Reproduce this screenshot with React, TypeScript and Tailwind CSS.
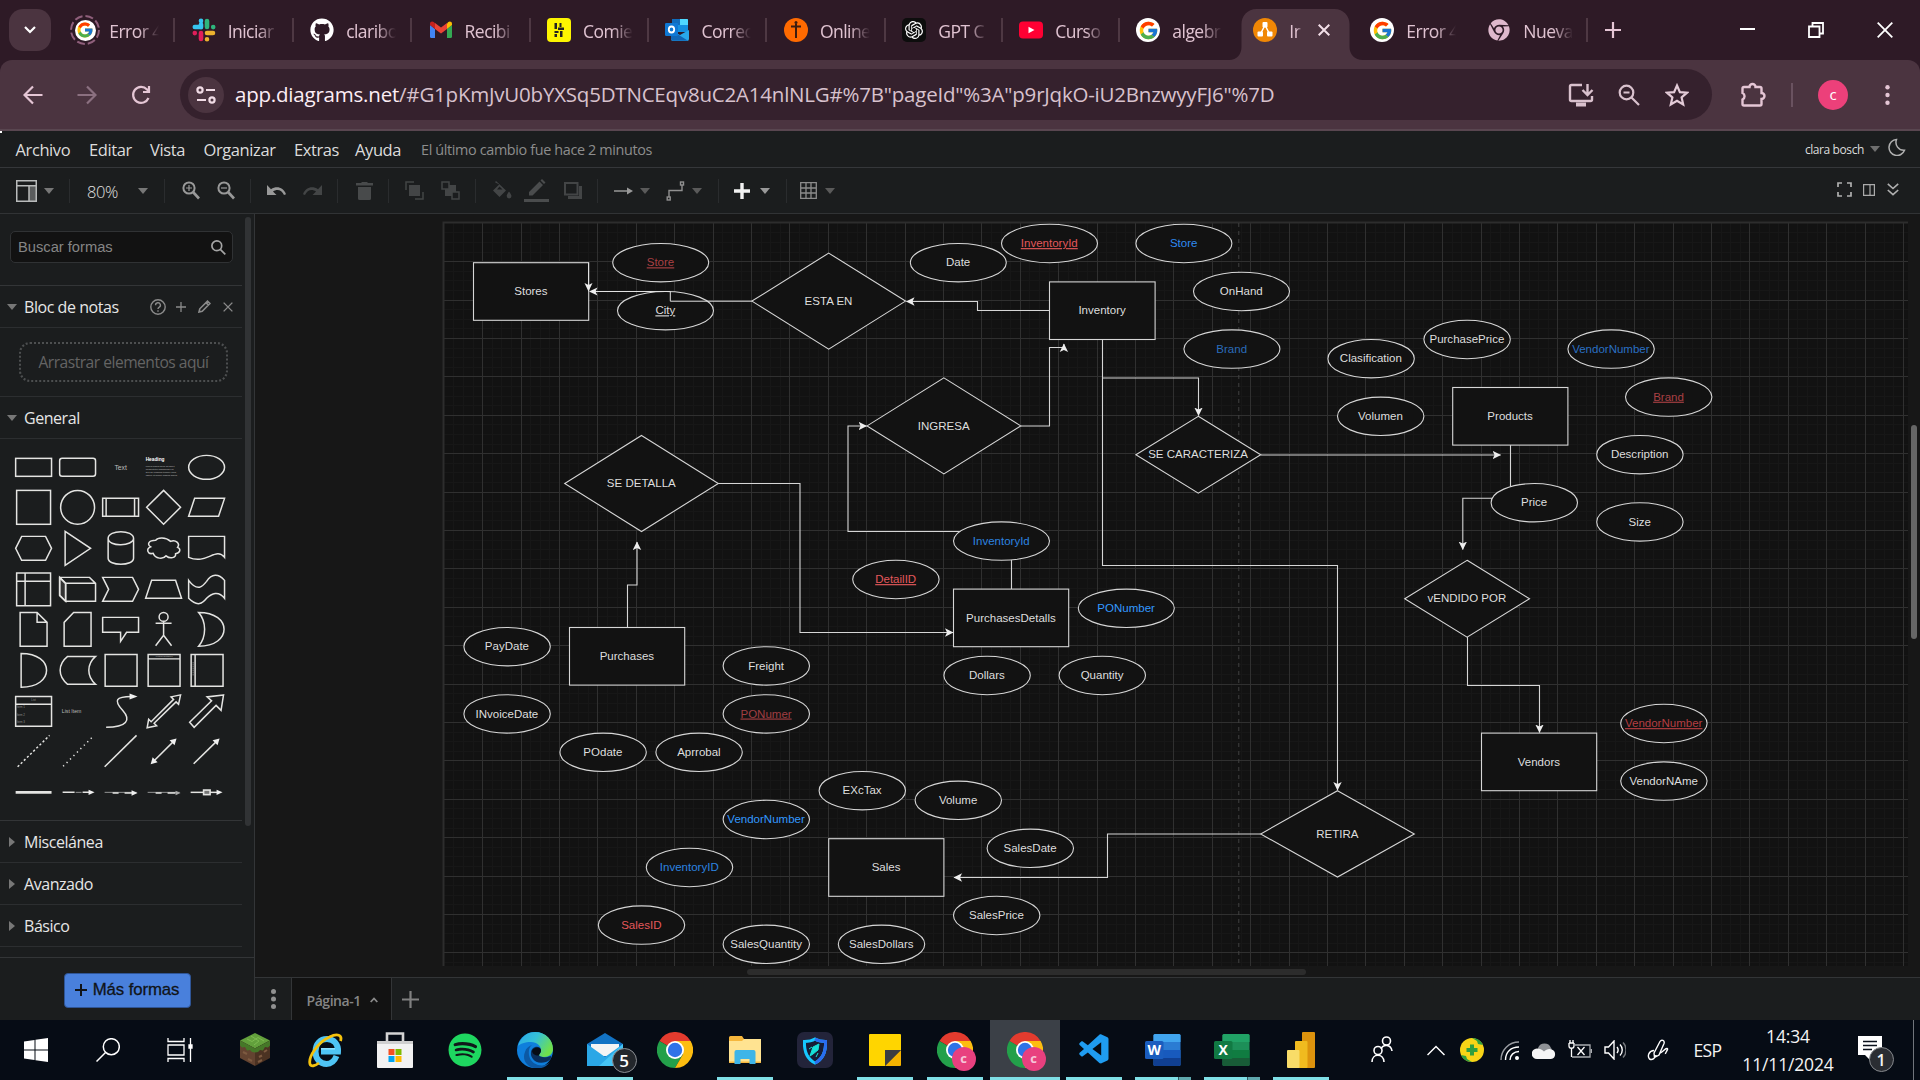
import type { ReactNode } from "react";
import { FcGoogle } from "react-icons/fc";
import { FaGithub, FaSpotify, FaChrome } from "react-icons/fa";
import { SiOpenai } from "react-icons/si";
import { VscVscode } from "react-icons/vsc";

/* ---------- Favicons ---------- */

const GoogleIcon = () => (
  <span className="flex size-6 items-center justify-center rounded-full bg-white">
    <FcGoogle className="size-[21px]" />
  </span>
);

const LoadingGoogle = () => (
  <span className="relative flex size-6 items-center justify-center">
    <svg className="absolute -inset-[3px] size-[30px]" viewBox="0 0 30 30" fill="none" stroke="#8f5f7b" strokeWidth="2">
      <circle cx="15" cy="15" r="14" strokeDasharray="8 3" />
    </svg>
    <span className="flex size-[21px] items-center justify-center rounded-full bg-white">
      <FcGoogle className="size-[18px]" />
    </span>
  </span>
);

const SlackIcon = () => (
  <svg viewBox="0 0 24 24" className="size-6">
    <g strokeWidth="4.6" strokeLinecap="round">
      <path d="M9 2.800v.100M9 6.500V9.200M2.800 9H6.500" stroke="#36c5f0" />
      <path d="M15 3v6M21.200 9v.100" stroke="#2eb67d" />
      <path d="M15 15h6M15 21.200v.100" stroke="#ecb22e" />
      <path d="M9 15v6M2.800 15v.100" stroke="#e01e5a" />
    </g>
  </svg>
);

const GmailIcon = () => (
  <svg viewBox="0 0 24 24" className="size-6">
    <path d="M1 19V7l5 4v9H2.400A1.400 1.400 0 0 1 1 19Z" fill="#4285f4" />
    <path d="M23 19V7l-5 4v9h3.600A1.400 1.400 0 0 0 23 19Z" fill="#34a853" />
    <path d="M18 5.500V11l5-4V5.700c0-2-2.200-2.900-3.700-1.700Z" fill="#fbbc04" />
    <path d="M6 11V5l6 4.600L18 5v6l-6 4.600Z" fill="#ea4335" />
    <path d="M1 5.700V7l5 4V5.200L4.700 4C3.200 2.800 1 3.700 1 5.700Z" fill="#c5221f" />
  </svg>
);

const YellowIcon = () => (
  <svg viewBox="0 0 24 24" className="size-6">
    <rect width="24" height="24" rx="4" fill="#fdf500" />
    <path d="M7.500 5h2.500v6H7.500zM12.500 5h2v4h-2zM11 9.500h6v2.500h-6zM7.500 13h4v2h-4zM7.500 16h2.500v3H7.500zM13 13h2.500v6H13z" fill="#222" />
  </svg>
);

const OutlookIcon = () => (
  <svg viewBox="0 0 24 24" className="size-6">
    <rect x="7" y="1" width="16" height="13" rx="1" fill="#1490df" />
    <path d="M7 7h8V1H8a1 1 0 0 0-1 1z" fill="#0f6cbd" />
    <path d="M15 1h7a1 1 0 0 1 1 1v5h-8z" fill="#50d9ff" />
    <path d="M6 12l9 5 9-5v9a2 2 0 0 1-2 2H8a2 2 0 0 1-2-2z" fill="#28a8ea" />
    <path d="M6 12l17 10.700H8a2 2 0 0 1-2-2z" fill="#1066b5" />
    <rect y="5" width="13" height="13" rx="1.200" fill="#0f78d4" />
    <ellipse cx="6.500" cy="11.500" rx="2.700" ry="3" fill="none" stroke="#fff" strokeWidth="1.800" />
  </svg>
);

const OrangeIcon = () => (
  <svg viewBox="0 0 24 24" className="size-6">
    <circle cx="12" cy="12" r="12" fill="#ff6a00" />
    <path d="M12 6v14M7 8.500h10" stroke="#3b1c10" strokeWidth="2" />
    <circle cx="12" cy="4.500" r="1.500" fill="#3b1c10" />
  </svg>
);

const GptIcon = () => (
  <span className="flex size-6 items-center justify-center rounded-[5px] bg-[#0d0d0d]">
    <SiOpenai className="size-[18px] text-white" />
  </span>
);

const YoutubeIcon = () => (
  <svg viewBox="0 0 24 24" className="size-6">
    <rect y="3.500" width="24" height="17" rx="4" fill="#ff0033" />
    <path d="M9.500 8.800v6.500l6-3.250z" fill="#fff" />
  </svg>
);

const DrawioIcon = () => (
  <svg viewBox="0 0 24 24" className="size-6">
    <circle cx="12" cy="12" r="12" fill="#f08705" />
    <path d="M12 7 7.500 16M12 7l4.500 9" stroke="#fff" strokeWidth="1.500" />
    <rect x="9.500" y="4" width="5" height="5.500" rx="1" fill="#fff" />
    <rect x="4.500" y="13.500" width="5.500" height="5" rx="1" fill="#fff" />
    <rect x="14" y="13.500" width="5.500" height="5" rx="1" fill="#fff" />
  </svg>
);

const ChromeGray = () => <FaChrome className="m-px size-[22px] text-[#dfb8cc]" />;

/* ---------- Browser chrome ---------- */

type TabData = { icon: ReactNode; label: string; wide?: boolean; sep?: boolean; active?: boolean };

const tabs: TabData[] = [
  { icon: <LoadingGoogle />, label: "Error 4", wide: true, sep: true },
  { icon: <SlackIcon />, label: "Iniciar", wide: true, sep: true },
  { icon: <FaGithub className="size-6 text-white" />, label: "claribo", wide: true, sep: true },
  { icon: <GmailIcon />, label: "Recibi", wide: true, sep: true },
  { icon: <YellowIcon />, label: "Comie", wide: true, sep: true },
  { icon: <OutlookIcon />, label: "Correo", wide: true, sep: true },
  { icon: <OrangeIcon />, label: "Online", wide: true, sep: true },
  { icon: <GptIcon />, label: "GPT C", sep: true },
  { icon: <YoutubeIcon />, label: "Curso", sep: true },
  { icon: <GoogleIcon />, label: "algebr" },
  { icon: <DrawioIcon />, label: "Ir", active: true },
  { icon: <GoogleIcon />, label: "Error 4" },
  { icon: <ChromeGray />, label: "Nueva", sep: true },
];

function Tab({ icon, label, wide, sep, active }: TabData) {
  return (
    <div className={`relative flex h-[60px] shrink-0 items-center pl-[16.500px] ${wide ? "w-[118.450px]" : "w-[117px]"}`}>
      {active && (
        <svg className="absolute top-[9px] -left-2 h-[51px] w-[134px]" viewBox="0 0 134 51">
          <path d="M0 51c8 0 12.500-6 12.500-13V15c0-8 6-15 15-15h78c9 0 15 7 15 15v23c0 7 5 13 13.500 13z" fill="#4b3440" />
        </svg>
      )}
      <span className="relative shrink-0">{icon}</span>
      <span
        className={`relative mt-[2px] ml-3 overflow-hidden text-[17.500px] tracking-[-0.55px] whitespace-nowrap text-[#e0c3d1] [mask-image:linear-gradient(to_right,#000_60%,transparent)] ${active ? "w-[13px]" : "w-[50px]"}`}
      >
        {label}
      </span>
      {active && (
        <svg className="relative ml-[16px] size-3" viewBox="0 0 12 12" stroke="#f3dfe8" strokeWidth="2">
          <path d="M.7.700l10.600 10.600M11.300.7.700 11.300" />
        </svg>
      )}
      {sep && <span className="ml-auto h-6 w-[2px] shrink-0 bg-[#4e3843]" />}
    </div>
  );
}

function TabStrip() {
  return (
    <div className="flex h-[60px] items-center bg-[#2e1a26]">
      <div className="ml-[9px] flex h-[42px] w-[42px] items-center justify-center rounded-[14px] bg-[#4b3440]">
        <svg className="h-2 w-3" viewBox="0 0 12 8" fill="none" stroke="#fff" strokeWidth="2.200">
          <path d="m1 1 5 5 5-5" />
        </svg>
      </div>
      <div className="ml-[5.800px] flex">
        {tabs.map((t, i) => (
          <Tab key={i} {...t} />
        ))}
      </div>
      <svg className="ml-[17px] size-4" viewBox="0 0 16 16" stroke="#e5c6d5" strokeWidth="2.200">
        <path d="M8 0v16M0 8h16" />
      </svg>
      <div className="ml-auto flex items-center pr-[27px]">
        <svg className="h-4 w-[15px]" viewBox="0 0 15 16" stroke="#fff" strokeWidth="2">
          <path d="M0 7h15" />
        </svg>
        <svg className="ml-[53px] size-4" viewBox="0 0 16 16" fill="none" stroke="#fff" strokeWidth="1.800">
          <path d="M1 4.500h10.500V15H1zM4.500 4V1H15v10.500h-3" />
        </svg>
        <svg className="ml-[53px] size-4" viewBox="0 0 16 16" stroke="#fff" strokeWidth="1.800">
          <path d="m.700.700 14.600 14.600M15.300.7.700 15.300" />
        </svg>
      </div>
    </div>
  );
}

function AddressBar() {
  return (
    <div className="bg-[#2e1a26]">
      <div className="flex h-[71px] items-center rounded-t-[12px] border-b-2 border-[#594650] bg-[#4b3440]">
        <svg className="ml-[23px] h-5 w-5" viewBox="0 0 20 20" fill="none" stroke="#e5c6d5" strokeWidth="2.200">
          <path d="M19.500 10H2M10 1.500 1.500 10l8.500 8.500" />
        </svg>
        <svg className="ml-[34px] h-5 w-5" viewBox="0 0 20 20" fill="none" stroke="#8b7080" strokeWidth="2.200">
          <path d="M.5 10H18M10 1.500l8.500 8.500-8.500 8.500" />
        </svg>
        <svg className="ml-[34px] h-5 w-5" viewBox="0 0 20 20" fill="none" stroke="#e5c6d5" strokeWidth="2.200">
          <path d="M17.500 13A8 8 0 1 1 16 4.400l2 2M18 1v6h-6" />
        </svg>
        <div className="ml-[29px] flex h-[51px] w-[1532px] items-center rounded-full bg-[#35212d]">
          <span className="ml-[8px] flex size-9 items-center justify-center rounded-full bg-[#4b3440]">
            <svg className="h-[18px] w-5" viewBox="0 0 20 18" fill="none" stroke="#f0dbe5" strokeWidth="2.200">
              <circle cx="4" cy="4" r="2.600" />
              <path d="M10 4h9M1 14h9" />
              <circle cx="16" cy="14" r="2.600" />
            </svg>
          </span>
          <span className="ml-[11px] flex-1 text-[20.500px] tracking-[-0.21px] whitespace-nowrap text-[#d8c2cd]">
            <span className="text-[#fdeef5]">app.diagrams.net</span>
            {'/#G1pKmJvU0bYXSq5DTNCEqv8uC2A14nlNLG#%7B"pageId"%3A"p9rJqkO-iU2BnzwyyFJ6"%7D'}
          </span>
          <svg className="h-6 w-[26px]" viewBox="0 0 26 24" fill="none" stroke="#d9c1cd" strokeWidth="2.400">
            <path d="M14 2H3.500A1.500 1.500 0 0 0 2 3.500v13A1.500 1.500 0 0 0 3.500 18h19a1.500 1.500 0 0 0 1.500-1.500V13" />
            <path d="M8 21.500h10" strokeWidth="4" />
            <path d="M19.500 1v10.500M14.500 7l5 5 5-5" />
          </svg>
          <svg className="ml-[24px] size-[22px]" viewBox="0 0 22 22" fill="none" stroke="#d9c1cd" strokeWidth="2.200">
            <circle cx="8.500" cy="8.500" r="6.800" />
            <path d="m13.500 13.500 7.500 7.500M5.500 8.500h6" />
          </svg>
          <svg className="mr-[23px] ml-[25px] size-6" viewBox="0 0 24 24" fill="none" stroke="#e3cbd7" strokeWidth="2.200">
            <path d="m12 2.500 2.900 6.600 7.100.600-5.400 4.700 1.600 7L12 17.700l-6.200 3.700 1.600-7L2 9.700l7.100-.600z" />
          </svg>
        </div>
        <svg className="ml-[28px] size-[26px]" viewBox="0 0 26 26" fill="none" stroke="#e5c6d5" strokeWidth="2.400">
          <path d="M2.500 6.500a1.500 1.500 0 0 1 1.500-1.500h5.500a3 3 0 0 1 6 0H20a1.500 1.500 0 0 1 1.500 1.500V11a3 3 0 0 1 0 6v5a1.500 1.500 0 0 1-1.500 1.500H4A1.500 1.500 0 0 1 2.500 22v-4.500a3.600 3.600 0 0 0 0-6.500z" />
        </svg>
        <span className="ml-[25px] h-6 w-[2px] bg-[#6a5260]" />
        <span className="ml-[25px] flex size-[30px] items-center justify-center rounded-full bg-[#ec407a] text-[15px] text-white">c</span>
        <svg className="ml-[37px] h-5 w-[5px]" viewBox="0 0 5 20" fill="#e5c6d5">
          <circle cx="2.500" cy="2.200" r="2.200" />
          <circle cx="2.500" cy="10" r="2.200" />
          <circle cx="2.500" cy="17.800" r="2.200" />
        </svg>
      </div>
    </div>
  );
}

/* ---------- Editor bars ---------- */

const Tri = ({ className = "" }: { className?: string }) => (
  <svg className={`h-[6px] w-[10px] shrink-0 ${className}`} viewBox="0 0 10 6" fill="currentColor">
    <path d="M0 0h10L5 6z" />
  </svg>
);

const Sep = ({ className = "" }: { className?: string }) => <span className={`h-6 w-px shrink-0 bg-[#2a2c2e] ${className}`} />;

function MenuBar() {
  return (
    <div className="flex h-[37px] items-center border-b border-[#35373a] bg-[#1b1d1e] text-[16.500px] tracking-[-0.4px] text-[#dcdcdc]">
      <span className="h-[2px] w-[2px] self-start bg-white" />
      <div className="mt-[2px] ml-[13.500px] flex items-center">
        <span className="w-[73.500px]">Archivo</span>
        <span className="w-[61px]">Editar</span>
        <span className="w-[53.500px]">Vista</span>
        <span className="w-[90.500px]">Organizar</span>
        <span className="w-[61px]">Extras</span>
        <span className="w-[66px]">Ayuda</span>
        <span className="text-[14.400px] tracking-[-0.36px] text-[#8d8d8d]">El último cambio fue hace 2 minutos</span>
      </div>
      <span className="mt-[2px] ml-auto text-[12px] tracking-[-0.4px] text-[#dcdcdc]">clara bosch</span>
      <Tri className="ml-[6px] text-[#6f6f6f]" />
      <svg className="mr-[14px] mb-1 ml-[8px] size-[18px]" viewBox="0 0 18 18" fill="none" stroke="#b0b0b0" strokeWidth="1.500">
        <path d="M8.500 1.500a8 8 0 0 0 8 10.800A8 8 0 1 1 8.500 1.500Z" />
      </svg>
    </div>
  );
}

function Toolbar() {
  return (
    <div className="flex h-[46px] items-center border-b border-[#313335] bg-[#1b1d1e]">
      <svg className="ml-4 h-[22px] w-[21px] shrink-0" viewBox="0 0 21 22" fill="none" stroke="#b9bbbb" strokeWidth="1.500">
        <rect x="13" y="6" width="7" height="15" fill="#5a5c5d" stroke="none" />
        <path d="M.75.750h19.500v20.500H.750zM.750 5.800h19.500M13 6v15" />
      </svg>
      <Tri className="ml-[7px] text-[#777]" />
      <Sep className="ml-[15px]" />
      <span className="mt-1 ml-[17px] w-[51px] text-[16.500px] font-light tracking-[-0.4px] text-[#e0e0e0]">80%</span>
      <Tri className="text-[#777]" />
      <Sep className="ml-[16px]" />
      <svg className="ml-[17px] h-[19px] w-[18px] shrink-0" viewBox="0 0 18 19" fill="none" stroke="#999" strokeWidth="2">
        <circle cx="7" cy="7" r="5.600" />
        <path d="m11 11 6 6.500" strokeWidth="2.600" />
        <path d="M4 7h6M7 4v6" strokeWidth="1.200" />
      </svg>
      <svg className="ml-[17px] h-[19px] w-[18px] shrink-0" viewBox="0 0 18 19" fill="none" stroke="#999" strokeWidth="2">
        <circle cx="7" cy="7" r="5.600" />
        <path d="m11 11 6 6.500" strokeWidth="2.600" />
        <path d="M4 7h6" strokeWidth="1.200" />
      </svg>
      <Sep className="ml-[15px]" />
      <svg className="ml-[16px] h-[11px] w-[19px] shrink-0" viewBox="0 0 19 11" fill="#999">
        <path d="M0 0v10h9.500L6 6.500c4-3 9-1.500 11 3.500l2-.700C16.500 2.200 9.500.500 4 4.300z" />
      </svg>
      <svg className="ml-[17px] h-[11px] w-[19px] shrink-0" viewBox="0 0 19 11" fill="#434546">
        <path d="M19 0v10H9.500L13 6.500C9 3.500 4 5 2 10L0 9.300C2.500 2.200 9.500.500 15 4.300z" />
      </svg>
      <Sep className="ml-[15px]" />
      <svg className="ml-[18px] h-[18px] w-[17px] shrink-0" viewBox="0 0 17 18" fill="#484a4b">
        <path d="M0 1h5l1-1h5l1 1h5v2.500H0zM2 5h13v11.500a1.500 1.500 0 0 1-1.500 1.500h-10A1.500 1.500 0 0 1 2 16.500z" />
      </svg>
      <Sep className="ml-[15px]" />
      <svg className="ml-[16px] size-[19px] shrink-0" viewBox="0 0 19 19" fill="none" stroke="#434546" strokeWidth="1.500">
        <path d="M1 9V1h8M18 11v7h-8" />
        <rect x="4" y="4" width="11" height="11" fill="#434546" stroke="none" />
      </svg>
      <svg className="ml-[17px] size-[19px] shrink-0" viewBox="0 0 19 19" fill="none" stroke="#434546" strokeWidth="1.500">
        <path d="M4 4h11v11H4z" fill="#434546" stroke="none" />
        <rect x="1" y="1" width="7" height="7" fill="#1b1d1e" />
        <rect x="11" y="11" width="7" height="7" fill="#1b1d1e" />
      </svg>
      <Sep className="ml-[15px]" />
      <svg className="ml-[16px] h-[19px] w-5 shrink-0" viewBox="0 0 20 19" fill="#434546">
        <path d="M4 0 14 9.500 7.500 16 1 9.500l6.200-6L3 1.200zM17 10.500s2.500 3 2.500 4.500a2.400 2.400 0 0 1-4.800 0c0-1.500 2.300-4.500 2.300-4.500z" />
        <path d="M5 8.500h5.500L7.500 5.500z" fill="#1b1d1e" />
      </svg>
      <svg className="ml-[12px] h-[23px] w-[25px] shrink-0" viewBox="0 0 25 23" fill="#4a4c4d">
        <path d="M0 20h25v3H0zM5 16.500V13L15.500 2.500 19 6 8.500 16.500zM16.500 1.500 18 0l3.500 3.500L20 5z" />
      </svg>
      <svg className="ml-[15px] h-[17px] w-[18px] shrink-0" viewBox="0 0 18 17" fill="none" stroke="#434546" strokeWidth="2">
        <path d="M16.500 4v11.500H4" strokeWidth="3" />
        <rect x="1" y="1" width="12.500" height="11.500" fill="#1b1d1e" />
      </svg>
      <Sep className="ml-[15px]" />
      <svg className="ml-[16px] h-2 w-5 shrink-0" viewBox="0 0 20 8" stroke="#999" strokeWidth="1.500">
        <path d="M0 4h14" />
        <path d="M13 .5v7l6-3.500z" fill="#999" stroke="none" />
      </svg>
      <Tri className="ml-[6px] text-[#5a5a5a]" />
      <svg className="ml-[16px] h-5 w-5 shrink-0" viewBox="0 0 20 20" fill="none" stroke="#909090" strokeWidth="1.400">
        <path d="M3 16V9.500h13V4" />
        <rect x="1.200" y="16" width="3" height="3" />
        <rect x="14.500" y="1" width="3" height="3" />
      </svg>
      <Tri className="ml-[6px] text-[#5a5a5a]" />
      <Sep className="ml-[16px]" />
      <svg className="ml-[15px] size-4 shrink-0" viewBox="0 0 16 16" stroke="#f2f2f2" strokeWidth="3.400">
        <path d="M8 0v16M0 8h16" />
      </svg>
      <Tri className="ml-[10px] text-[#999]" />
      <Sep className="ml-[16px]" />
      <svg className="ml-[13px] size-[17px] shrink-0" viewBox="0 0 17 17" fill="none" stroke="#8c8c8c" strokeWidth="1.300">
        <path d="M.7.700h15.600v15.600H.700zM6 .7v15.600M11 .7v15.600M.7 6h15.600M.7 11h15.600" />
      </svg>
      <Tri className="ml-[8px] text-[#5a5a5a]" />
      <svg className="mr-[1px] mb-[2px] ml-auto size-[15px] shrink-0" viewBox="0 0 15 15" fill="none" stroke="#b0b0b0" strokeWidth="1.700">
        <path d="M1 5V1h4M10 1h4v4M14 10v4h-4M5 14H1v-4" />
      </svg>
      <svg className="mb-[2px] ml-[10px] h-3 w-3 shrink-0" viewBox="0 0 12 12" fill="none" stroke="#aaa" strokeWidth="1.200">
        <path d="M.6.600h10.800v10.800H.600zM7 .6v10.800" />
      </svg>
      <svg className="mr-[21px] mb-[2px] ml-[12px] h-[13px] w-3 shrink-0" viewBox="0 0 12 13" fill="none" stroke="#b0b0b0" strokeWidth="1.600">
        <path d="m.8.800 5.200 4.700L11.200.8M.8 7 6 11.700 11.200 7" />
      </svg>
    </div>
  );
}

/* ---------- Shape palette ---------- */

const tiny = "fill-[#bdbdbd] stroke-none";

const palette: ReactNode[] = [
  <rect x="-18" y="-9" width="36" height="18" />,
  <rect x="-18" y="-9" width="36" height="18" rx="2.500" />,
  <text className={tiny} fontSize="6.800" textAnchor="middle" y="2.300">Text</text>,
  <g className={tiny} fontSize="2.400">
    <text x="-18" y="-6.500" fontSize="4.800" fontWeight="700" fill="#fff">Heading</text>
    <text x="-18" y="0">Lorem ipsum dolor sit amet,</text>
    <text x="-18" y="3">consectetur adipisicing elit,</text>
    <text x="-18" y="6">sed do eiusmod tempor incid</text>
    <text x="-18" y="8.500">labore et dolore magna aliqua</text>
  </g>,
  <ellipse rx="18" ry="12" />,
  <rect x="-17" y="-17" width="34" height="34" />,
  <circle r="17" />,
  <path d="M-18-9h36V9h-36zM-14.500-9V9M14-9V9" />,
  <path d="M0-17 17 0 0 17-17 0z" />,
  <path d="M-12-9h30L12 9h-30z" />,
  <path d="M-12-12h24l6 12-6 12h-24l-6-12z" />,
  <path d="M-12.500-17 13 0l-25.500 17z" />,
  <path d="M-12.500-10v20c0 8 25.500 8 25.500 0v-20c0-9-25.500-9-25.500 0s25.500 8 25.500 0" />,
  <path d="M-8-8c-7 0-9 4-5 6.500-5 2-3 8 2.500 6.500 2 5.500 10 6.500 13 2.500 4 3.500 10 2 9.500-2 5-1 5.500-5 2-6.500 3-4-2-8-7-6C2-11.500-6-11-8-8z" />,
  <path d="M-18-12h36V9C9-2 0 17-18 9z" />,
  <path d="M-17-16.500h34v33h-34zM-8.500-16.500v33M-17-8h34" />,
  <g><path d="M-18-12-12-6V12l-6-6z" fill="#333" /><path d="M-18-12h30l6 6V12h-30l-6-6zM-12 12V-6h30M-12-6l-6-6" /></g>,
  <path d="M-18-12h30l6 12-6 12h-30l6-12z" />,
  <path d="M-12-9h24l6 18h-36z" />,
  <path d="M-18-9C-9 3-4-3 0-8 5-16 12-16 18-9V9C12 1 5 4 0 9-4 14-9 18-18 9z" />,
  <path d="M-13.500-17H3.500L13.500-7v24h-27zM3.500-17v10h10" />,
  <path d="M-4-17h17.500v34h-27V-7z" />,
  <path d="M-18-12h36V3H6L0 12V3h-18z" />,
  <g><circle cy="-12.500" r="4.500" /><path d="M0-8V6M-8-6H8M-8 16.500 0 6l8 10.500" /></g>,
  <path d="M-8-17c34 0 34 34 0 34C0 8 0-8-8-17z" />,
  <path d="M-12.500-17c34 0 34 34 0 34z" />,
  <path d="M-10-14h28c-9 8-9 20 0 28h-28c-10-8-10-20 0-28z" />,
  <path d="M-15.500-16h32v32h-32z" />,
  <g><path d="M-15.500-16h32v32h-32zM-15.500-11.500h32" /><text className={tiny} fontSize="2.200" x=".5" y="-13" textAnchor="middle">Vertical Container</text></g>,
  <g><path d="M-15.500-16h32v32h-32zM-11.500-16v32" /><path d="M-13.500-8V6" strokeWidth=".7" strokeDasharray="1 1" /></g>,
  <g><path d="M-18-15h36v30h-36zM-18-7h36" /><g className="fill-[#8c8c8c] stroke-none" fontSize="3"><text y="-10" textAnchor="middle">List</text><text x="-17" y="-3">Item 1</text><text x="-17" y="5">Item 2</text><text x="-17" y="12">Item 3</text></g></g>,
  <text className={tiny} fontSize="5.200" textAnchor="middle" x="-6" y="2">List Item</text>,
  <g><path d="M-14.500 16C6 16 11 9 2-1s-7-14 9-14" /><path d="m9-18 8 3-8 3z" fill="#f0f0f0" stroke="none" /></g>,
  <path d="M17-16.500 7.500-14.500 10-12-12.500 10.500-15 8l-1.500 8.500 9.500-2L-9.500 12 12.500-9.500 15-7z" />,
  <path d="M17-16.500.5-14.500 5-10.500-17 11l4.500 5L9.500-6l5 5z" />,
  <path d="M-16 15.500 16-16" strokeDasharray="2.200 2.200" />,
  <path d="M-14.500 15 15-14.500" strokeDasharray="1.300 3.600" />,
  <path d="M-16 15.500 16-16" />,
  <g><path d="M-11 11 11-11" /><path d="m13-13-7 2 5 5zM-13 13l7-2-5-5z" fill="#f0f0f0" stroke="none" /></g>,
  <g><path d="M-13 12.500 11-11" /><path d="m13-13-7 2 5 5z" fill="#f0f0f0" stroke="none" /></g>,
  <path d="M-18 0h36" strokeWidth="2.700" />,
  <g><path d="M-15 0h12M5 0h8" /><path d="M-2 0h6" strokeWidth=".6" /><path d="m11-2.700 6 2.700-6 2.700z" fill="#f0f0f0" stroke="none" /></g>,
  <g><path d="M-8 .7h6M4 .7h8" /><path d="M-16 0h32" strokeWidth=".6" /><path d="m11-2 6 2.700-6 2.700z" fill="#f0f0f0" stroke="none" /></g>,
  <g><path d="M-8 .7h6M4 .7h8" /><path d="M-16 0h32" strokeWidth=".6" /><path d="m12-1.600 5 2.300-5 2.300z" fill="#aaa" stroke="none" /></g>,
  <g><path d="M-16 0h27" /><path d="m10-2.700 6 2.700-6 2.700z" fill="#f0f0f0" stroke="none" /><rect x="-3" y="-2.300" width="6.500" height="4.600" fill="#777" strokeWidth="1.600" /></g>,
];

function SectionHeader({ label, open, children }: { label: string; open?: boolean; children?: ReactNode }) {
  return (
    <div className="flex h-[42px] w-[242px] items-center border-b border-[#2c2e30] text-[16px] tracking-[-0.45px] text-[#e6e6e6]">
      <span className="flex w-[24px] shrink-0 justify-center text-[#777]">
        {open ? (
          <Tri />
        ) : (
          <svg className="h-[10px] w-[6px]" viewBox="0 0 6 10" fill="currentColor">
            <path d="M0 0v10l6-5z" />
          </svg>
        )}
      </span>
      <span>{label}</span>
      {children}
    </div>
  );
}

function Sidebar() {
  return (
    <div className="flex w-[255px] shrink-0 flex-col border-r border-[#333537] bg-[#1b1d1e]">
      <div className="flex h-[744px] border-b border-[#333537]">
        <div className="flex w-[242px] shrink-0 flex-col">
          <div className="h-[72px] border-b border-[#333537] pt-[17px] pl-[10px]">
            <div className="flex h-8 w-[223px] items-center justify-between rounded-[5px] border border-[#303234] bg-[#121212] pr-[6px] pl-[7px] font-['Liberation_Sans',sans-serif] text-[14.700px] text-[#858585]">
              Buscar formas
              <svg className="size-[15px]" viewBox="0 0 15 15" fill="none" stroke="#a5a5a5" strokeWidth="1.700">
                <circle cx="5.800" cy="5.800" r="4.900" />
                <path d="m9.300 9.300 5 5" />
              </svg>
            </div>
          </div>
          <SectionHeader label="Bloc de notas" open>
            <span className="ml-auto flex items-center pr-[9px] text-[#8b8b8b]">
              <svg className="size-4" viewBox="0 0 16 16" fill="none" stroke="currentColor" strokeWidth="1.400">
                <circle cx="8" cy="8" r="7.200" />
                <path d="M5.600 6.300a2.400 2.400 0 1 1 3.400 2c-.8.500-1 .8-1 1.700M8 11.300v1.500" />
              </svg>
              <svg className="ml-[10px] size-[10px]" viewBox="0 0 11 11" stroke="currentColor" strokeWidth="1.400">
                <path d="M5.500 0v11M0 5.500h11" />
              </svg>
              <svg className="ml-[12px] size-[13px]" viewBox="0 0 13 13" fill="none" stroke="currentColor" strokeWidth="1.600">
                <path d="m1 12 .8-3.200 7.700-7.700 2.400 2.400-7.700 7.700zM8 2.600 10.400 5" />
              </svg>
              <svg className="ml-[12px] size-[10px]" viewBox="0 0 11 11" stroke="currentColor" strokeWidth="1.500">
                <path d="m.7.700 9.600 9.600M10.300.7.700 10.300" />
              </svg>
            </span>
          </SectionHeader>
          <div className="h-[69px] border-b border-[#2c2e30] pt-[14px] pl-[19px]">
            <div className="flex h-10 w-[209px] items-center justify-center rounded-[11px] border-2 border-dotted border-[#4d4f50] pt-[2px] text-[15.600px] tracking-[-0.5px] whitespace-nowrap text-[#646464]">
              Arrastrar elementos aquí
            </div>
          </div>
          <SectionHeader label="General" open />
          <div className="h-[382px] border-b border-[#333537] pt-[7.500px] pl-[12.400px]">
            <div className="grid w-[216px] grid-cols-5">
              {palette.map((shape, i) => (
                <svg
                  key={i}
                  className="h-[40.700px] w-[43.200px] font-['Liberation_Sans',sans-serif]"
                  viewBox="-21.600 -20.400 43.200 40.800"
                  fill="none"
                  stroke="#e4e4e2"
                  strokeWidth="1.500"
                >
                  {shape}
                </svg>
              ))}
            </div>
          </div>
          <SectionHeader label="Miscelánea" />
          <SectionHeader label="Avanzado" />
          <SectionHeader label="Básico" />
        </div>
        <span className="mt-[3px] ml-[3px] h-[609px] w-[6px] rounded-full bg-[#313335]" />
      </div>
      <div className="flex flex-1 justify-center pt-[14.500px]">
        <div className="flex h-[35px] w-[127px] items-center justify-center gap-[6px] rounded-[4px] border border-[#2f5596] bg-[#4980dc] font-['Liberation_Sans',sans-serif] text-[16.800px] tracking-[-0.1px] whitespace-nowrap text-[#101418] [-webkit-text-stroke:0.3px_#101418]">
          <svg className="size-3 shrink-0" viewBox="0 0 12 12" stroke="#101418" strokeWidth="2">
            <path d="M6 0v12M0 6h12" />
          </svg>
          Más formas
        </div>
      </div>
    </div>
  );
}

/* ---------- Diagram ---------- */

const U = 9.6;
const X0 = 473.5;
const Y0 = 262.7;
const px = (n: number) => X0 + n * U;
const py = (m: number) => Y0 + m * U;

type Kind = "rect" | "ellipse" | "diamond";
/* kind, column, row, width, height (grid units), label, colour, underlined */
type Node = [Kind, number, number, number, number, string, string?, boolean?];

const nodes: Node[] = [
  ["rect", 0, 0, 12, 6, "Stores"],
  ["ellipse", 14.5, -2, 10, 4, "Store", "#a94044", true],
  ["ellipse", 15, 3, 10, 4, "City", "#dcdcdc", true],
  ["diamond", 29, -1, 16, 10, "ESTA EN"],
  ["ellipse", 45.5, -2, 10, 4, "Date"],
  ["ellipse", 55, -4, 10, 4, "InventoryId", "#e3585b", true],
  ["rect", 60, 2, 11, 6, "Inventory"],
  ["ellipse", 69, -4, 10, 4, "Store", "#2f8af0"],
  ["ellipse", 75, 1, 10, 4, "OnHand"],
  ["ellipse", 74, 7, 10, 4, "Brand", "#2a6cba"],
  ["diamond", 69, 16, 13, 8, "SE CARACTERIZA"],
  ["ellipse", 89, 8, 9, 4, "Clasification"],
  ["ellipse", 99, 6, 9, 4, "PurchasePrice"],
  ["ellipse", 114, 7, 9, 4, "VendorNumber", "#2a70c4"],
  ["ellipse", 90, 14, 9, 4, "Volumen"],
  ["rect", 102, 13, 12, 6, "Products"],
  ["ellipse", 120, 12, 9, 4, "Brand", "#a94044", true],
  ["ellipse", 117, 18, 9, 4, "Description"],
  ["ellipse", 117, 25, 9, 4, "Size"],
  ["ellipse", 106, 23, 9, 4, "Price"],
  ["diamond", 97, 31, 13, 8, "vENDIDO POR"],
  ["rect", 105, 49, 12, 6, "Vendors"],
  ["ellipse", 119.5, 46, 9, 4, "VendorNumber", "#b53e42", true],
  ["ellipse", 119.5, 52, 9, 4, "VendorNAme"],
  ["diamond", 82, 55, 16, 9, "RETIRA"],
  ["diamond", 41, 12, 16, 10, "INGRESA"],
  ["diamond", 9.5, 18, 16, 10, "SE DETALLA"],
  ["ellipse", 50, 27, 10, 4, "InventoryId", "#2c84e0"],
  ["ellipse", 39.5, 31, 9, 4, "DetailID", "#e3585b", true],
  ["rect", 50, 34, 12, 6, "PurchasesDetalls"],
  ["ellipse", 63, 34, 10, 4, "PONumber", "#3399ff"],
  ["ellipse", 49, 41, 9, 4, "Dollars"],
  ["ellipse", 61, 41, 9, 4, "Quantity"],
  ["rect", 10, 38, 12, 6, "Purchases"],
  ["ellipse", -1, 38, 9, 4, "PayDate"],
  ["ellipse", -1, 45, 9, 4, "INvoiceDate"],
  ["ellipse", 26, 40, 9, 4, "Freight"],
  ["ellipse", 26, 45, 9, 4, "PONumer", "#a03e42", true],
  ["ellipse", 9, 49, 9, 4, "POdate"],
  ["ellipse", 19, 49, 9, 4, "Aprrobal"],
  ["ellipse", 36, 53, 9, 4, "EXcTax"],
  ["ellipse", 46, 54, 9, 4, "Volume"],
  ["ellipse", 26, 56, 9, 4, "VendorNumber", "#3399ff"],
  ["ellipse", 18, 61, 9, 4, "InventoryID", "#2c84e0"],
  ["ellipse", 13, 67, 9, 4, "SalesID", "#e3585b"],
  ["ellipse", 26, 69, 9, 4, "SalesQuantity"],
  ["ellipse", 38, 69, 9, 4, "SalesDollars"],
  ["ellipse", 50, 66, 9, 4, "SalesPrice"],
  ["ellipse", 53.5, 59, 9, 4, "SalesDate"],
  ["rect", 37, 60, 12, 6, "Sales"],
];

const edges = [
  "M1049.500 310.500H977.500V301.500H906.500",
  "M1020.700 426H1049.500V347.500H1063.900V344",
  "M1011.500 589V531.500H848V426H866.500",
  "M718.300 483.500H800V632.500H953",
  "M627.500 627.500V585H637V542",
  "M1102.500 339.500V565.500H1337.500V790",
  "M1102.500 378H1198.500V415.500",
  "M1260.700 455H1500.500",
  "M1510.500 445V498.200H1462.800V549.500",
  "M1467.500 637V685.500H1539.500V732.500",
  "M1260.700 834H1107.500V877.500H954",
];

function NodeShape({ node }: { node: Node }) {
  const [kind, n, m, w, h, label, color = "#dedede", underline] = node;
  const x = px(n);
  const y = py(m);
  const W = w * U;
  const H = h * U;
  return (
    <g>
      {kind === "rect" && <rect x={x} y={y} width={W} height={H} />}
      {kind === "ellipse" && <ellipse cx={x + W / 2} cy={y + H / 2} rx={W / 2} ry={H / 2} />}
      {kind === "diamond" && <path d={`M${x + W / 2} ${y}l${W / 2} ${H / 2}l${-W / 2} ${H / 2}l${-W / 2} ${-H / 2}z`} />}
      <text
        x={x + W / 2 - 0.2}
        y={y + H / 2 + 3.6}
        textAnchor="middle"
        fill={color}
        stroke="none"
        textDecoration={underline ? "underline" : undefined}
      >
        {label}
      </text>
    </g>
  );
}

const steps = (from: number, to: number, step: number) => {
  const out: number[] = [];
  for (let i = 0; from + i * step < to; i++) out.push(Math.floor(from + i * step) + 0.5);
  return out;
};

function Diagram() {
  const left = 443;
  const top = 222;
  const lines = (xs: number[], ys: number[]) =>
    xs.map((x) => `M${x} ${top}V966`).join("") + ys.map((y) => `M${left} ${y}H1908`).join("");
  return (
    <svg className="block h-[752px] w-[1653px] font-['Liberation_Sans',sans-serif]" viewBox="255 214 1653 752" fontSize="11.520">
      <defs>
        <marker id="tip" markerUnits="userSpaceOnUse" markerWidth="12" markerHeight="12" refX="8" refY="4.500" orient="auto">
          <path d="M8.500 4.500 0 .3 2 4.500 0 8.700z" fill="#eee" />
        </marker>
      </defs>
      <rect x={left} y={top} width="1465" height="744" fill="#121212" />
      <path d={lines(steps(453.8, 1908, 9.6), steps(232.800, 966, 9.6))} stroke="#171717" />
      <path d={lines(steps(482.6, 1908, 38.4), steps(261.600, 966, 38.4))} stroke="#303030" />
      <path d="M1908 222.500H443.500V966" fill="none" stroke="#2d2d2d" strokeWidth="2" />
      <path d="M1238.800 223V966" stroke="#424242" strokeDasharray="4 4" />
      <g fill="none" stroke="#d6d6d6" strokeWidth="1.100">
        {edges.map((d) => (
          <path key={d} d={d} markerEnd="url(#tip)" />
        ))}
      </g>
      <g fill="#121212" stroke="#d6d6d6" strokeWidth="1.100">
        {nodes.map((node, i) => (
          <NodeShape key={i} node={node} />
        ))}
      </g>
      <path d="M588.500 262.700V291M751.900 301.200H670.300V291.500H590" fill="none" stroke="#e2e2e2" />
      <path d="M588.500 291.500l-4-8.500 4 2 4-2zM589 291.500l8.500-4-2 4 2 4z" fill="#eee" />
    </svg>
  );
}

function Canvas() {
  return (
    <div className="flex flex-1 flex-col bg-[#171717]">
      <div className="flex h-[752px]">
        <Diagram />
        <span className="mt-[211px] ml-[3px] h-[214px] w-[6px] rounded-full bg-[#666]" />
      </div>
      <div className="flex h-[12px] border-b border-[#333537] pt-[3px]">
        <span className="ml-[492px] h-[6px] w-[559px] rounded-full bg-[#2c2c2c]" />
      </div>
      <div className="flex flex-1 bg-[#1b1d1e]">
        <div className="flex w-[37px] items-center justify-center border-r border-[#333537]">
          <svg className="h-5 w-[5px]" viewBox="0 0 5 20" fill="#909090">
            <circle cx="2.500" cy="2.500" r="2.500" />
            <circle cx="2.500" cy="10" r="2.500" />
            <circle cx="2.500" cy="17.500" r="2.500" />
          </svg>
        </div>
        <div className="flex w-[100px] items-center border-r border-[#333537] bg-[#121212] pt-[2px] pl-[14.500px] text-[14px] font-semibold tracking-[-0.45px] text-[#858585]">
          Página-1
          <svg className="ml-[9px] h-[6px] w-2" viewBox="0 0 8 6" fill="none" stroke="#8a8a8a" strokeWidth="1.800">
            <path d="m.7 5 3.300-3.500L7.300 5" />
          </svg>
        </div>
        <svg className="mt-[13px] ml-[10px] size-[17px]" viewBox="0 0 17 17" stroke="#808080" strokeWidth="2.200">
          <path d="M8.500 0v17M0 8.500h17" />
        </svg>
      </div>
    </div>
  );
}

/* ---------- Taskbar ---------- */

const ChromeLogo = () => (
  <svg viewBox="0 0 36 36" className="size-9">
    <path d="M18 18 2.400 9A18 18 0 0 1 33.600 9z" fill="#e33b2e" />
    <path d="M18 18 2.400 9A18 18 0 0 0 18 36l7.800-13.500z" fill="#23a04a" />
    <path d="M33.600 9H18l7.800 13.500L18 36A18 18 0 0 0 33.600 9z" fill="#fdbd10" />
    <circle cx="18" cy="18" r="9" fill="#fff" />
    <circle cx="18" cy="18" r="7.200" fill="#2f73e8" />
  </svg>
);

const ChromeProfile = () => (
  <span className="relative">
    <ChromeLogo />
    <span className="absolute top-[15px] left-[15px] flex size-6 items-center justify-center rounded-full bg-[#e8407f] text-[13px] font-bold text-[#f6c6d9]">c</span>
  </span>
);

const OfficeLogo = ({ letter, tones }: { letter: string; tones: [string, string, string, string, string] }) => (
  <svg viewBox="0 0 36 34" className="h-[34px] w-9">
    <rect x="8.500" y="1" width="27" height="32" rx="1.500" fill={tones[1]} />
    <path d="M8.500 9V2.500A1.500 1.500 0 0 1 10 1h24a1.500 1.500 0 0 1 1.500 1.500V9z" fill={tones[0]} />
    <path d="M8.500 17h27v8h-27z" fill={tones[2]} />
    <path d="M8.500 25h27v6.500A1.500 1.500 0 0 1 34 33H10a1.500 1.500 0 0 1-1.500-1.500z" fill={tones[3]} />
    <rect y="8" width="18.500" height="18" rx="1.500" fill={tones[4]} />
    <text x="9.250" y="22" textAnchor="middle" fontSize="14" fontWeight="700" fill="#fff">{letter}</text>
  </svg>
);

const apps: { icon: ReactNode; run?: boolean; active?: boolean; narrow?: boolean; double?: boolean }[] = [
  {
    icon: (
      <svg viewBox="0 0 32 34" className="h-[34px] w-8">
        <path d="M16 0 31 7.500 16 15.500 1 7.500z" fill="#62a03c" />
        <path d="M1 7.500 16 15.500V33L1 25z" fill="#634330" />
        <path d="M31 7.500 16 15.500V33l15-8z" fill="#4b3222" />
        <path d="M1 7.500 16 15.500v4l-3-.5-2-2-3 .5-2-3.500-3 .5-2-2zM31 7.500 16 15.500v4l3-.5 2-2 3 .5 2-3.500 3 .5 2-2z" fill="#457828" />
        <path d="m8 6 5 2.500 6-4 6 3.500M12 3l8 5-5 4" stroke="#7dba50" strokeWidth="1" fill="none" />
        <path d="m4 19 4 2M9 26l4 2M20 24l3-1.500M25 19l3-2M19 29l4-2" stroke="#7d5a40" strokeWidth="2" />
      </svg>
    ),
  },
  {
    icon: (
      <svg viewBox="0 0 36 36" className="size-9">
        <path d="M29.500 24c-2 5-6 8-10 8-6.500 0-11-5-11-12.500S13 7 20 7s11.500 5.500 11 12.500H14" fill="none" stroke="#4fc5f5" strokeWidth="6" />
        <path d="M14 16.800h14" stroke="#8be0ff" strokeWidth="1.600" />
        <path d="M33.500 9c2-6-3-8-11-4C11 10 1 25 3 32c1 3 5 2 9-1" fill="none" stroke="#f4c20d" strokeWidth="2.800" />
      </svg>
    ),
  },
  {
    icon: (
      <svg viewBox="0 0 36 36" className="size-9">
        <path d="M10 12V1.500h16V12" fill="none" stroke="#d4d4d4" strokeWidth="2.600" />
        <path d="M0 9h36v26a1 1 0 0 1-1 1H1a1 1 0 0 1-1-1z" fill="#f2f2f2" />
        <path d="M0 9h36v3H0z" fill="#cfcfcf" />
        <path d="M11.500 17h6v6h-6z" fill="#f25022" />
        <path d="M18.500 17h6v6h-6z" fill="#7fba00" />
        <path d="M11.500 24h6v6h-6z" fill="#00a4ef" />
        <path d="M18.500 24h6v6h-6z" fill="#ffb900" />
      </svg>
    ),
  },
  { icon: <FaSpotify className="size-[34px] rounded-full bg-[#10181a] text-[#1ed760]" /> },
  {
    run: true,
    icon: (
      <svg viewBox="0 0 36 36" className="size-9">
        <defs>
          <linearGradient id="edgeTop" x1="0" y1="0" x2="1" y2=".5">
            <stop offset="0" stopColor="#2aa8e8" />
            <stop offset=".5" stopColor="#35c1d8" />
            <stop offset="1" stopColor="#6fe04c" />
          </linearGradient>
        </defs>
        <circle cx="18" cy="18" r="18" fill="#0f7fdc" />
        <path d="M1 14C4 4 11 0 18 0c11 0 18 8 18 17 0 5-4 8-9 8-3 0-5-1-5-2 0-1 2-2 2-5 0-4-4-8-10-8-6 0-11 2-13 4z" fill="url(#edgeTop)" />
        <path d="M15 13c-5 3-5 17 6 20 5 1 9 0 12-3-4 6-10 7-16 6C9 34 5 27 8 20c1-4 4-6 7-7z" fill="#0c59a4" />
        <path d="M14 20c1-6 9-7 10-2 0 3-2 4-2 5 0 2 6 3.500 11.500 1 2.500 1-1 5-4.500 6-6 2-11 0-13-3-1.500-2-2.500-4-2-7z" fill="#0a2f5c" />
        <path d="M15 19c1-4 8-5 9-1 0 3-2 4-2 5 0 1-6 1-7-4z" fill="#060c16" />
      </svg>
    ),
  },
  {
    run: true,
    icon: (
      <span className="relative">
        <svg viewBox="0 0 36 36" className="size-9">
          <path d="M0 12 18 1l18 11v22H0z" fill="#1273c4" />
          <path d="M4 12h28v12H4z" fill="#f4f4f4" />
          <path d="M0 12l18 13 18-13v22H0z" fill="#2aa7e6" />
          <path d="M36 12v22H12z" fill="#45c3f3" />
        </svg>
        <span className="absolute top-[16px] left-[25px] flex size-[25px] items-center justify-center rounded-full border border-[#8b8f94] bg-[#23272c] text-[17px] font-semibold text-white">5</span>
      </span>
    ),
  },
  { icon: <ChromeLogo /> },
  {
    run: true,
    icon: (
      <svg viewBox="0 0 32 28" className="h-7 w-8">
        <path d="M0 1.500A1.500 1.500 0 0 1 1.500 0H13l2 3h17v24H0z" fill="#f6b73c" />
        <path d="M0 5h13l2-2h17v22.500H0z" fill="#ffe391" />
        <path d="M5.500 28V16a2 2 0 0 1 2-2h17a2 2 0 0 1 2 2v12h-6v-5h-9v5z" fill="#3eb5e8" />
      </svg>
    ),
  },
  {
    icon: (
      <svg viewBox="0 0 36 36" className="size-9">
        <rect width="36" height="36" rx="7" fill="#23243a" />
        <path d="M18 7c4 2.500 7 2.500 10.500 2.500C29 20 26 27 18 31 10 27 7 20 7.500 9.500 11 9.500 14 9.500 18 7z" fill="#171c36" stroke="#16c8ff" strokeWidth="3" />
        <path d="M18 7c4 2.500 7 2.500 10.500 2.500C29 20 26 27 18 31" fill="none" stroke="#2a6cf0" strokeWidth="3" />
        <path d="m13 24 3-9 6-3-1 6-5 4zM12 17l3-2M19 25l2-4" fill="#16e0d8" stroke="#16e0d8" strokeWidth="1" />
      </svg>
    ),
  },
  {
    run: true,
    icon: (
      <svg viewBox="0 0 32 32" className="size-8">
        <path d="M0 1a1 1 0 0 1 1-1h30a1 1 0 0 1 1 1v15L16 32H1a1 1 0 0 1-1-1z" fill="#ffd500" />
        <path d="M32 16v15a1 1 0 0 1-1 1H16z" fill="#f5b400" />
        <path d="M16 16h16L16 32z" fill="#3b3d42" />
      </svg>
    ),
  },
  { run: true, icon: <ChromeProfile /> },
  { run: true, active: true, icon: <ChromeProfile /> },
  { run: true, narrow: true, icon: <VscVscode className="ml-[2px] size-9 text-[#1f9cf0]" /> },
  { run: true, narrow: true, double: true, icon: <OfficeLogo letter="W" tones={["#41a5ee", "#2b7cd3", "#185abd", "#103f91", "#1a5dbe"]} /> },
  { run: true, narrow: true, double: true, icon: <OfficeLogo letter="X" tones={["#21a366", "#1d8f58", "#107c41", "#185c37", "#117a43"]} /> },
  {
    run: true,
    narrow: true,
    icon: (
      <svg viewBox="0 0 28 36" className="h-9 w-7">
        <rect x="15" width="13" height="36" rx="1" fill="#dc930d" />
        <rect x="8" y="9" width="12.500" height="27" rx="1" fill="#f0bb1f" />
        <rect y="18" width="12.500" height="18" rx="1" fill="#f8dc68" />
      </svg>
    ),
  },
];

function Taskbar() {
  return (
    <div className="flex h-[60px] items-center bg-[#060c15] text-[#f4f4f4]">
      <div className="flex w-[72px] justify-center">
        <svg className="size-6" viewBox="0 0 24 24" fill="#fff">
          <path d="M0 3.500 10.500 2v9.500H0zM11.500 1.800 24 0v11.500H11.500zM0 12.500h10.500V22L0 20.500zM11.500 12.500H24V24l-12.500-1.800z" />
        </svg>
      </div>
      <div className="flex w-[72px] justify-center">
        <svg className="size-6" viewBox="0 0 24 24" fill="none" stroke="#fff" strokeWidth="1.500">
          <circle cx="15.300" cy="8.700" r="8" />
          <path d="M9.500 14.500.5 23.500" />
        </svg>
      </div>
      <div className="mr-[3.500px] flex w-[72px] justify-center">
        <svg className="h-6 w-[26px]" viewBox="0 0 26 24" fill="none" stroke="#fff" strokeWidth="1.300">
          <path d="M1 7h16v10H1zM1 0v3.500h16V0M1 24v-3.500h16V24M23.500 0v24" />
          <path d="M22 7h3v3h-3z" fill="#fff" />
        </svg>
      </div>
      {apps.map((a, i) => (
        <div
          key={i}
          className={`flex h-[60px] shrink-0 flex-col items-center ${a.narrow ? "w-[69px]" : "w-[70px]"} ${a.active ? "bg-[#3b4047]" : ""}`}
        >
          <div className="flex h-[57px] items-center pt-[3px]">{a.icon}</div>
          {a.run && (
            <span className={`flex h-[3px] justify-end bg-[#7fdfe6] ${a.active ? "w-full" : "w-[56px]"}`}>
              {a.double && <span className="h-full w-[13px] border-l border-[#2d5a60] bg-[#5fa8ae]" />}
            </span>
          )}
        </div>
      ))}
      <svg className="ml-[35px] h-[28px] w-[22px] shrink-0" viewBox="0 0 22 28" fill="none" stroke="#fff" strokeWidth="1.600">
        <circle cx="15.500" cy="5" r="4" />
        <circle cx="7" cy="14.500" r="4" />
        <path d="M10 13c2-5 10-5 11 2M1 26c0-9 11.500-9 12 0" />
      </svg>
      <svg className="ml-[34px] h-[11px] w-[18px] shrink-0" viewBox="0 0 18 11" fill="none" stroke="#fff" strokeWidth="1.500">
        <path d="m.5 10 8.500-8.500 8.500 8.500" />
      </svg>
      <svg className="ml-[15px] size-6 shrink-0" viewBox="0 0 24 24">
        <circle cx="12" cy="12" r="12" fill="#f7d417" />
        <path d="M12 0a12 12 0 0 1 11 7l-5-1-1-3zM12 24A12 12 0 0 1 1 17l5 1 1 3z" fill="#2f9e3f" />
        <path d="M10 6.500h4V10h3.500v4H14v3.500h-4V14H6.500v-4H10z" fill="#2f9e3f" />
      </svg>
      <svg className="ml-[16px] size-[19px] shrink-0" viewBox="0 0 19 19" fill="none" stroke="#fff" strokeWidth="1.400">
        <path d="M1 19C1 9 9 1 19 1" stroke="#9a9da2" />
        <path d="M5.500 19C5.500 11 11 6 19 6M10 19c0-5 4-8.500 9-8.500" />
        <circle cx="17" cy="17" r="1.300" fill="#fff" />
      </svg>
      <svg className="ml-[13px] h-[18px] w-6 shrink-0" viewBox="0 0 24 18">
        <path d="M6 7a7 7 0 0 1 13 0l2 3-14 3z" fill="#8f9296" />
        <path d="M5 18a5 5 0 0 1 0-10.500c3 0 5 1 7 3 2-2 5-3 7-2a4.800 4.800 0 0 1 0 9.500z" fill="#f5f5f5" />
      </svg>
      <svg className="ml-[12px] h-5 w-6 shrink-0" viewBox="0 0 24 20" fill="none" stroke="#fff" strokeWidth="1.300">
        <path d="M1 3v3c0 3 5 3 5 0V3M1 3h5M2 3V0M5 3V0M3.500 8v9" />
        <path d="M7 5h15v12H4M23.500 9v4" stroke="#a9acb0" />
        <path d="m9.500 7 7 8M16.500 7l-7 8" />
      </svg>
      <svg className="ml-[12px] h-5 w-[22px] shrink-0" viewBox="0 0 22 20" fill="none" stroke="#fff" strokeWidth="1.400">
        <path d="M1 7h3.500L10 1v18l-5.500-6H1z" />
        <path d="M13 7c1.500 2 1.500 4 0 6M16 4.500c3 3 3 8 0 11" />
        <path d="M19 2.500c4 4 4 11 0 15" stroke="#777a7e" />
      </svg>
      <svg className="ml-[21px] size-[22px] shrink-0" viewBox="0 0 22 22" fill="none" stroke="#fff" strokeWidth="1.400">
        <path d="M7 14 13 2.500c1.500-2.500 5-1 4 2L12 16l-4.500 2.500zM7 11.500c-5 0-7 5.500-4.500 8.500 3 1.500 6-1 6.500-4M13 14c3-1 5-5 7-4.500s-2 4-1.500 5.500" />
      </svg>
      <span className="ml-[25px] w-[29px] text-[17.500px] tracking-[-0.6px]">ESP</span>
      <div className="ml-[19px] flex w-[93px] shrink-0 flex-col items-center text-[17.500px] leading-[28.500px] tracking-[-0.15px] whitespace-nowrap">
        <span>14:34</span>
        <span>11/11/2024</span>
      </div>
      <div className="relative ml-[23px] shrink-0">
        <svg className="mt-[-4px] h-6 w-6" viewBox="0 0 24 24">
          <path d="M0 0h24v19H12v5l-5-5H0z" fill="#fff" />
          <path d="M5 5.500h14M5 9.500h14M5 13.500h9" stroke="#0b111c" strokeWidth="1.300" />
        </svg>
        <span className="absolute top-[7px] left-[11px] flex size-[25px] items-center justify-center rounded-full border border-[#85888c] bg-[#2a2d32] text-[16px] font-semibold">1</span>
      </div>
      <span className="mr-[6px] ml-auto h-full w-px bg-[#70757c]" />
    </div>
  );
}

export default function App() {
  return (
    <div className="flex h-[1080px] w-[1920px] flex-col overflow-hidden bg-[#1b1d1e] font-['Open_Sans',sans-serif]">
      <TabStrip />
      <AddressBar />
      <MenuBar />
      <Toolbar />
      <div className="flex min-h-0 flex-1">
        <Sidebar />
        <Canvas />
      </div>
      <Taskbar />
    </div>
  );
}
